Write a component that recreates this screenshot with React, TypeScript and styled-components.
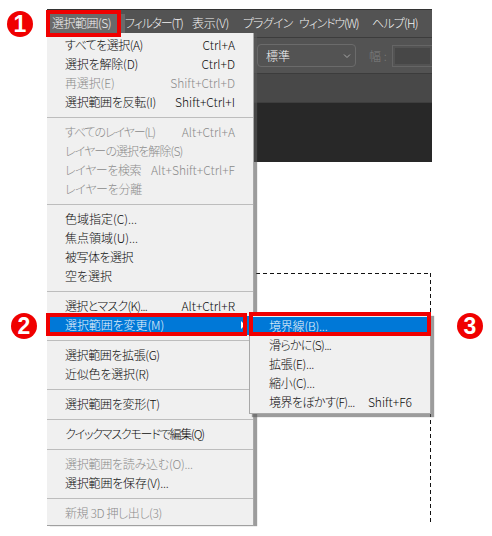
import React from "react";
import styled, { createGlobalStyle } from "styled-components";

const Global = createGlobalStyle`
  html, body { margin: 0; padding: 0; background: #fff; }
  body {
    font-family: "Noto Sans CJK JP", "Noto Sans", sans-serif;
    font-size: 12px;
    font-weight: 300;
    font-feature-settings: "palt";
  }
`;

const Page = styled.div`
  position: relative;
  width: 492px;
  height: 536px;
  overflow: hidden;
  background: #fff;
`;

const AppWindow = styled.div`
  margin: 9px 0 0 47px;
  width: 385px;
  display: flex;
  flex-direction: column;
`;

const MenuBar = styled.div`
  height: 28px;
  box-sizing: border-box;
  border-top: 1px solid #333;
  background: #535353;
  display: flex;
  align-items: center;
  padding-left: 3px;
  color: #f2f2f2;
`;

const BarItem = styled.div<{ $active?: boolean; $w: number; $ls: number }>`
  width: ${(p) => p.$w}px;
  height: 19px;
  box-sizing: border-box;
  line-height: 18px;
  white-space: nowrap;
  padding-left: ${(p) => (p.$active ? 2 : 0)}px;
  letter-spacing: ${(p) => p.$ls}px;
  background: ${(p) => (p.$active ? "#6a6a6a" : "transparent")};
`;

const OptionsBar = styled.div`
  height: 37px;
  box-sizing: border-box;
  border-top: 1px solid #3c3c3c;
  border-bottom: 1px solid #3c3c3c;
  background: #535353;
  display: flex;
  align-items: center;
  padding-left: 210px;
`;

const Select = styled.div`
  width: 99px;
  height: 23px;
  box-sizing: border-box;
  border: 1px solid #6b6b6b;
  border-radius: 4px;
  display: flex;
  align-items: center;
  justify-content: space-between;
  padding: 0 3px 0 8px;
  color: #f4f4f4;
`;

const FieldLabel = styled.span`
  margin-left: 13px;
  width: 23px;
  color: #808080;
  white-space: pre;
`;

const Field = styled.div`
  flex: 1;
  height: 22px;
  box-sizing: border-box;
  border: 1px solid #656565;
  border-right: 0;
  padding: 2px;
  & > div { height: 100%; background: #474747; }
`;

const SubBar = styled.div`
  height: 29px;
  background: #484848;
  box-sizing: border-box;
  border-bottom: 1px solid #3e3e3e;
`;

const Workspace = styled.div`
  height: 59px;
  background: #282828;
`;

const MarqueeTop = styled.div`
  position: absolute;
  left: 200px;
  top: 273px;
  width: 231px;
  height: 1px;
  background: repeating-linear-gradient(90deg, #111 0 4px, transparent 4px 7px);
`;

const MarqueeRight = styled.div`
  position: absolute;
  left: 430px;
  top: 273px;
  width: 1px;
  height: 252px;
  background: repeating-linear-gradient(180deg, #111 0 4px, transparent 4px 7px);
`;

const Menu = styled.div<{ $x: number; $y: number; $w: number }>`
  position: absolute;
  left: ${(p) => p.$x}px;
  top: ${(p) => p.$y}px;
  width: ${(p) => p.$w}px;
  box-sizing: border-box;
  background: #f0f0f0;
  color: #0c0c0c;
  box-shadow: 3px 3px 1px rgba(90, 90, 90, 0.6);
`;

const MainMenu = styled(Menu)`
  padding: 2.5px 0 2px;
  border-right: 1px solid #a8a8a8;
  border-bottom: 1px solid #a0a0a0;
  box-shadow: 3px 0 1px rgba(90, 90, 90, 0.6);
`;

const SubMenu = styled(Menu)`
  padding: 3px 0 1px;
  border: 1px solid #a8a8a8;
`;

const Row = styled.div<{ $off?: boolean; $on?: boolean; $left: number; $right: number; $h: number }>`
  height: ${(p) => p.$h}px;
  line-height: ${(p) => p.$h - 1}px;
  display: flex;
  justify-content: space-between;
  white-space: nowrap;
  padding: 0 ${(p) => p.$right}px 0 ${(p) => p.$left}px;
  color: ${(p) => (p.$on ? "#eaf3fb" : p.$off ? "#8b8b8b" : "#0c0c0c")};
  background: ${(p) => (p.$on ? "#0078d7" : "transparent")};
  position: relative;
`;

const Label = styled.span<{ $ls: number }>`
  letter-spacing: ${(p) => p.$ls}px;
`;

const Arrow = styled.span`
  position: absolute;
  right: 8px;
  top: 5px;
  width: 0;
  height: 0;
  border-left: 4px solid #fff;
  border-top: 4px solid transparent;
  border-bottom: 4px solid transparent;
`;

const Sep = styled.div`
  height: 11px;
  display: flex;
  align-items: center;
  &::after { content: ""; flex: 1; height: 1px; background: #bdbdbd; }
`;

const Outline = styled.div<{ $x: number; $y: number; $w: number; $h: number }>`
  position: absolute;
  left: ${(p) => p.$x}px;
  top: ${(p) => p.$y}px;
  width: ${(p) => p.$w}px;
  height: ${(p) => p.$h}px;
  box-sizing: border-box;
  border: 4px solid #f00000;
`;

const Badge = styled.div<{ $x: number; $y: number }>`
  position: absolute;
  left: ${(p) => p.$x}px;
  top: ${(p) => p.$y}px;
  width: 26px;
  height: 26px;
  border-radius: 50%;
  background: #f00000;
  color: #fff;
  font-family: "Liberation Sans", Arial, sans-serif;
  font-weight: 700;
  font-size: 23px;
  line-height: 26px;
  text-align: center;
`;

type Item = { t: string; ls?: number; k?: string; off?: boolean; on?: boolean; arrow?: boolean } | "-";

const mainItems: Item[] = [
  { t: "すべてを選択(A)", ls: -0.5, k: "Ctrl+A" },
  { t: "選択を解除(D)", ls: -0.2, k: "Ctrl+D" },
  { t: "再選択(E)", ls: -0.15, k: "Shift+Ctrl+D", off: true },
  { t: "選択範囲を反転(I)", ls: -0.3, k: "Shift+Ctrl+I" },
  "-",
  { t: "すべてのレイヤー(L)", ls: -1.1, k: "Alt+Ctrl+A", off: true },
  { t: "レイヤーの選択を解除(S)", ls: -0.9, off: true },
  { t: "レイヤーを検索", ls: -0.4, k: "Alt+Shift+Ctrl+F", off: true },
  { t: "レイヤーを分離", ls: -0.3, off: true },
  "-",
  { t: "色域指定(C)..." },
  { t: "焦点領域(U)..." },
  { t: "被写体を選択", ls: -0.5 },
  { t: "空を選択" },
  "-",
  { t: "選択とマスク(K)...", ls: -0.75, k: "Alt+Ctrl+R" },
  { t: "選択範囲を変更(M)", ls: -0.1, on: true, arrow: true },
  "-",
  { t: "選択範囲を拡張(G)", ls: -0.4 },
  { t: "近似色を選択(R)", ls: -0.2 },
  "-",
  { t: "選択範囲を変形(T)", ls: -0.3 },
  "-",
  { t: "クイックマスクモードで編集(Q)", ls: -1.2 },
  "-",
  { t: "選択範囲を読み込む(O)...", ls: -0.25, off: true },
  { t: "選択範囲を保存(V)...", ls: -0.2 },
  "-",
  { t: "新規 3D 押し出し(3)", ls: -0.4, off: true },
];

const subItems: Item[] = [
  { t: "境界線(B)...", ls: -0.2, on: true },
  { t: "滑らかに(S)...", ls: -0.7 },
  { t: "拡張(E)...", ls: -0.3 },
  { t: "縮小(C)...", ls: -0.3 },
  { t: "境界をぼかす(F)...", ls: -0.6, k: "Shift+F6" },
];

const renderItems = (items: Item[], left: number, right: number, h: number) =>
  items.map((it, i) =>
    it === "-" ? (
      <Sep key={i} />
    ) : (
      <Row key={i} $off={it.off} $on={it.on} $left={left} $right={right} $h={h}>
        <Label $ls={it.ls ?? 0}>{it.t}</Label>
        {it.k && <span>{it.k}</span>}
        {it.arrow && <Arrow />}
      </Row>
    )
  );

export default function App() {
  return (
    <Page>
      <Global />
      <AppWindow>
        <MenuBar>
          <BarItem $active $w={75} $ls={-0.5}>選択範囲(S)</BarItem>
          <BarItem $w={67} $ls={-1.2}>フィルター(T)</BarItem>
          <BarItem $w={51} $ls={-0.2}>表示(V)</BarItem>
          <BarItem $w={56} $ls={-0.8}>プラグイン</BarItem>
          <BarItem $w={73} $ls={-1.2}>ウィンドウ(W)</BarItem>
          <BarItem $w={50} $ls={-0.8}>ヘルプ(H)</BarItem>
        </MenuBar>
        <OptionsBar>
          <Select>
            <span>標準</span>
            <svg width="10" height="10" viewBox="0 0 10 10" fill="none" stroke="#a8a8a8" strokeWidth="1">
              <path d="M2 3.5 L5 6.5 L8 3.5" />
            </svg>
          </Select>
          <FieldLabel>幅 :</FieldLabel>
          <Field><div /></Field>
        </OptionsBar>
        <SubBar />
        <Workspace />
      </AppWindow>
      <MarqueeTop />
      <MarqueeRight />
      <MainMenu $x={47} $y={33} $w={207}>
        {renderItems(mainItems, 18, 18, 19)}
      </MainMenu>
      <SubMenu $x={249} $y={313} $w={182}>
        {renderItems(subItems, 19, 18, 19)}
      </SubMenu>
      <Outline $x={46} $y={10} $w={75} $h={27} />
      <Outline $x={46} $y={313} $w={201} $h={23} />
      <Outline $x={249} $y={312} $w={182} $h={24} />
      <Badge $x={7} $y={11}>1</Badge>
      <Badge $x={11} $y={313}>2</Badge>
      <Badge $x={457} $y={313}>3</Badge>
    </Page>
  );
}
